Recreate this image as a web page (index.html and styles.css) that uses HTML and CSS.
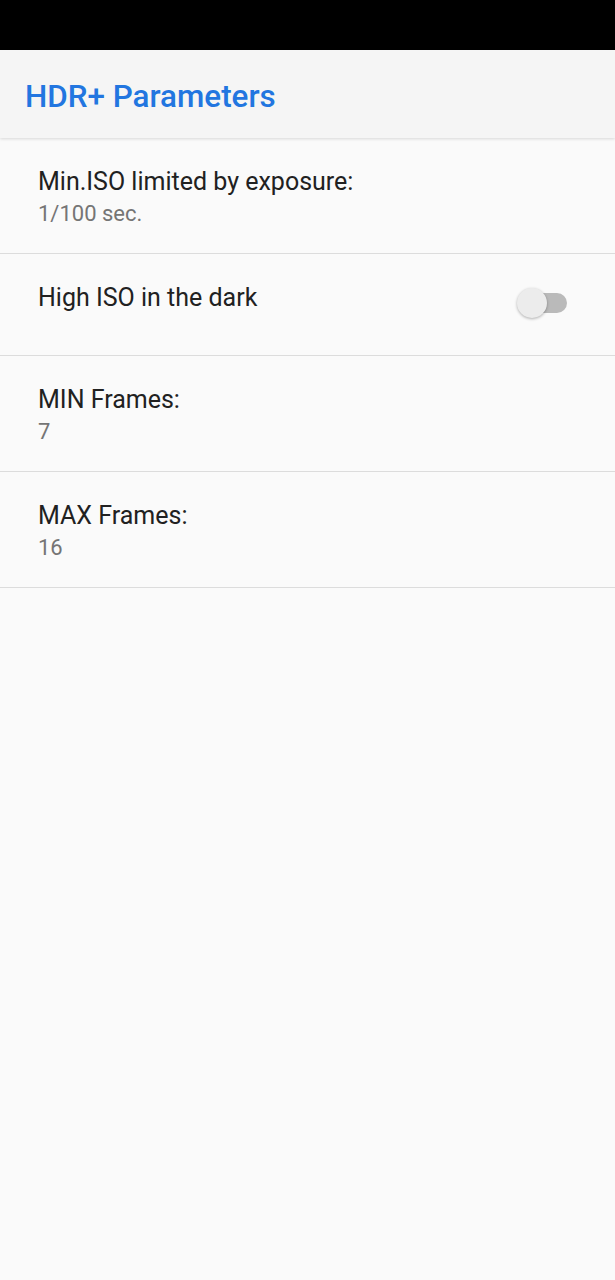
FILE: index.html
```html
<!DOCTYPE html>
<html>
<head>
<meta charset="utf-8">
<link rel="stylesheet" href="styles.css">
</head>
<body>
<div class="status"></div>
<header class="appbar"><h1 class="title">HDR+ Parameters</h1></header>
<main class="list">
  <div class="row">
    <div class="texts">
      <div class="label">Min.ISO limited by exposure:</div>
      <div class="summary">1/100 sec.</div>
    </div>
  </div>
  <div class="row row-switch">
    <div class="texts">
      <div class="label">High ISO in the dark</div>
    </div>
    <div class="switch"><div class="track"></div><div class="thumb"></div></div>
  </div>
  <div class="row">
    <div class="texts">
      <div class="label">MIN Frames:</div>
      <div class="summary">7</div>
    </div>
  </div>
  <div class="row">
    <div class="texts">
      <div class="label">MAX Frames:</div>
      <div class="summary">16</div>
    </div>
  </div>
</main>
</body>
</html>
```
FILE: styles.css
```css
html, body { margin: 0; padding: 0; }
body {
  background: #fafafa;
  font-family: Roboto, "Liberation Sans", sans-serif;
  width: 615px;
  min-height: 1280px;
}
.status { height: 50px; background: #000; }
.appbar {
  height: 88px;
  background: #f5f5f5;
  box-shadow: 0 1px 3px rgba(0,0,0,0.14);
  position: relative;
  z-index: 1;
  display: flex;
  align-items: center;
  padding-left: 25px;
}
.title {
  margin: 0;
  font-size: 31.4px;
  font-weight: 500;
  color: #2276e0;
  line-height: 36px;
  padding-top: 6px;
}
.row {
  display: flex;
  align-items: flex-start;
  padding: 28px 48px 25px 38px;
  border-bottom: 1px solid #dcdcdc;
}
.row-switch { padding-top: 28px; padding-bottom: 36px; }
.texts { flex: 1; }
.label {
  font-size: 25px;
  line-height: 32px;
  color: #212121;
}
.summary {
  margin-top: 2px;
  font-size: 22px;
  line-height: 28px;
  color: #757575;
}
.switch {
  position: relative;
  width: 50px;
  height: 32px;
  margin-top: 5px;
}
.track {
  position: absolute;
  left: 6px;
  right: 0;
  top: 6px;
  height: 20px;
  border-radius: 10px;
  background: #bababa;
}
.thumb {
  position: absolute;
  left: 0;
  top: 1px;
  width: 30px;
  height: 30px;
  border-radius: 50%;
  background: #ececec;
  box-shadow: 0 1px 3px rgba(0,0,0,0.3);
}
```
